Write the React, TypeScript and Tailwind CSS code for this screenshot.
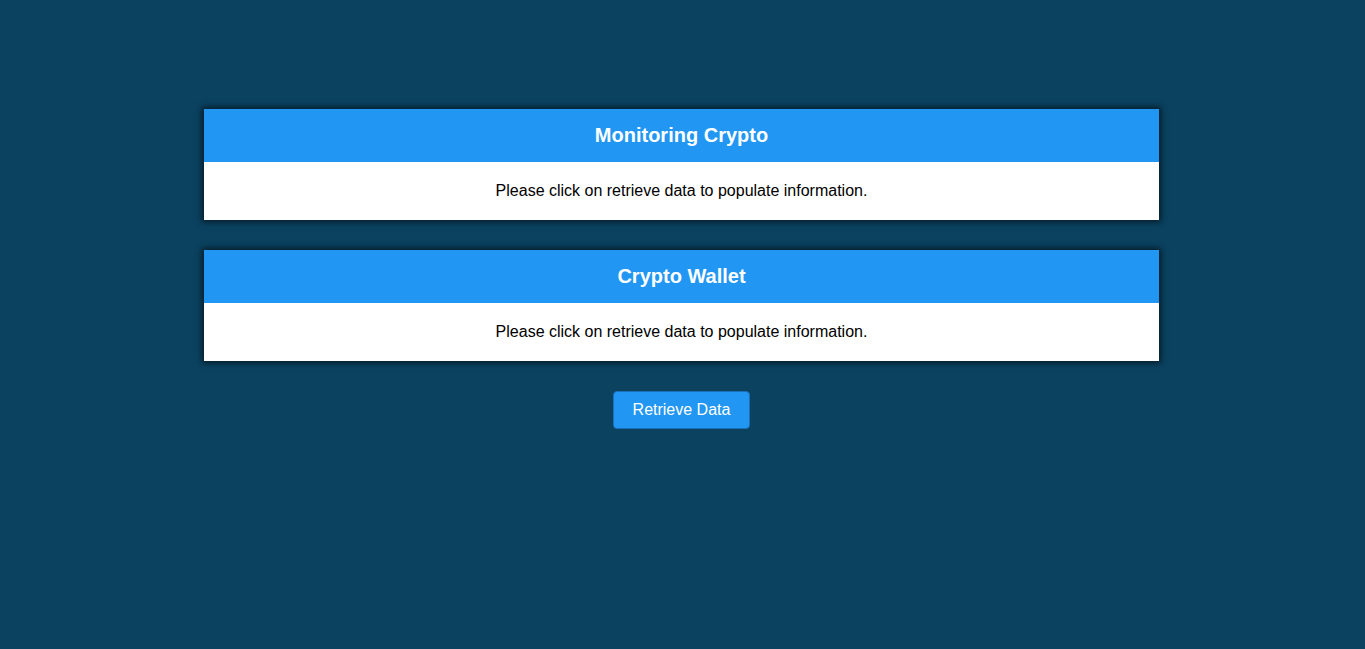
export default function App() {
  const Card = ({ title }: { title: string }) => (
    <div className="w-[955px] bg-white shadow-[0_0_6px_2px_rgba(0,0,0,0.6)]">
      <div className="bg-[#2196f3] py-[15px] text-center text-[20px] leading-[23px] font-bold text-white">
        {title}
      </div>
      <div className="py-[20px] text-center text-[16px] leading-[18px] text-black">
        Please click on retrieve data to populate information.
      </div>
    </div>
  );
  return (
    <div
      className="min-h-[649px] w-full bg-[#0a4260] flex flex-col items-center pt-[109px] pr-[2px]"
      style={{ fontFamily: '"Liberation Sans", Arial, sans-serif' }}
    >
      <div className="flex flex-col gap-[30px]">
        <Card title="Monitoring Crypto" />
        <Card title="Crypto Wallet" />
      </div>
      <button className="mt-[30px] w-[137px] h-[38px] rounded-[4px] border border-[#1a6fb5] bg-[#2196f3] text-white text-[16px] leading-[18px]">
        Retrieve Data
      </button>
    </div>
  );
}
